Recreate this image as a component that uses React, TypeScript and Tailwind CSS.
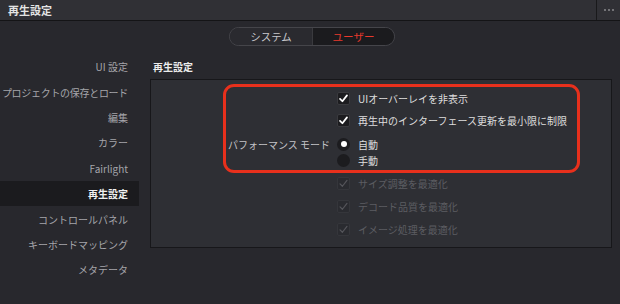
import React from 'react';

const font = { fontFamily: '"Noto Sans CJK JP", "Noto Sans", sans-serif' };

const sideItems = [
  'UI 設定',
  'プロジェクトの保存とロード',
  '編集',
  'カラー',
  'Fairlight',
  '再生設定',
  'コントロールパネル',
  'キーボードマッピング',
  'メタデータ',
];

const Check = ({ dim }: { dim?: boolean }) => (
  <span
    className={`flex h-[13px] w-[13px] shrink-0 items-center justify-center rounded-[2px] ${
      dim ? 'bg-[#2a2b30] border border-[#35363b]' : 'bg-[#1c1c1f] border border-[#3a3a3e]'
    }`}
  >
    <svg viewBox="0 0 12 12" className="h-[11px] w-[11px]">
      <path
        d="M2.2 6.4 L4.8 9 L9.8 2.6"
        fill="none"
        stroke={dim ? '#55565b' : '#ffffff'}
        strokeWidth={dim ? 1.3 : 1.9}
        strokeLinecap="round"
        strokeLinejoin="round"
      />
    </svg>
  </span>
);

const Radio = ({ on }: { on?: boolean }) => (
  <span className="flex h-[13px] w-[13px] shrink-0 items-center justify-center rounded-full bg-[#1c1c1f]">
    {on && <span className="h-[6px] w-[6px] rounded-full bg-white" />}
  </span>
);

export default function App() {
  return (
    <div style={font} className="flex h-[304px] w-[620px] flex-col overflow-hidden whitespace-nowrap bg-[#28282d] text-[10px]">
      <div className="flex h-[21px] shrink-0 items-center border-b border-[#141416] bg-[#303035]">
        <span className="pl-[8px] text-[11px] font-bold text-[#e4e4e4]">再生設定</span>
        <div className="ml-auto flex h-full w-[24px] items-center justify-center gap-[2px] border-l border-[#19191b]">
          <span className="h-[2px] w-[2px] rounded-full bg-[#8a8a8e]" />
          <span className="h-[2px] w-[2px] rounded-full bg-[#8a8a8e]" />
          <span className="h-[2px] w-[2px] rounded-full bg-[#8a8a8e]" />
        </div>
      </div>

      <div className="mt-[6px] flex justify-center pl-[4px]">
        <div className="flex h-[19px] overflow-hidden rounded-full border border-[#45454a]">
          <div className="flex w-[82px] items-center justify-center bg-[#2a2a2f] text-[10.5px] text-[#c8c8cc]">
            システム
          </div>
          <div className="flex w-[82px] items-center justify-center border-l border-[#3a3a3e] bg-[#1b1b1e] text-[10.5px] text-[#e8392c]">
            ユーザー
          </div>
        </div>
      </div>

      <div className="mt-[8px] flex flex-1">
        <div className="flex w-[139px] shrink-0 flex-col">
          {sideItems.map((s) => (
            <div
              key={s}
              className={`flex h-[25.4px] items-center justify-end pr-[11px] ${
                s === '再生設定' ? 'bg-[#1b1b1e] font-bold text-[#f0f0f0]' : 'text-[#a5a5aa]'
              } ${s.length > 10 ? 'tracking-[-0.3px]' : ''}`}
            >
              {s}
            </div>
          ))}
        </div>

        <div className="flex flex-1 flex-col pl-[11px] pr-[8px]">
          <div className="flex h-[25.4px] items-center pl-[3px] font-bold text-[#ececec]">再生設定</div>
          <div className="relative h-[169px] border border-[#17171a] bg-[#2e2f34] pt-[7px]">
            <div className="pointer-events-none absolute left-[72px] top-[4px] h-[89px] w-[357px] rounded-[11px] border-[3px] border-[#e8301c]" />
            <div className="flex flex-col">
              <div className="flex h-[22px] items-center pl-[186px]">
                <Check />
                <span className="ml-[8px] text-[#dedede]">UIオーバーレイを非表示</span>
              </div>
              <div className="flex h-[23px] items-center pl-[186px]">
                <Check />
                <span className="ml-[8px] text-[#dedede]">再生中のインターフェース更新を最小限に制限</span>
              </div>
              <div className="mt-[4px] flex">
                <div className="flex h-[16px] w-[179px] items-center justify-end text-[#c4c4c8]">パフォーマンス モード</div>
                <div className="ml-[7px] flex flex-col">
                  <div className="flex h-[16px] items-center">
                    <Radio on />
                    <span className="ml-[8px] text-[#dedede]">自動</span>
                  </div>
                  <div className="flex h-[16px] items-center">
                    <Radio />
                    <span className="ml-[8px] text-[#dedede]">手動</span>
                  </div>
                </div>
              </div>
              <div className="mt-[4px] flex h-[23px] items-center pl-[186px]">
                <Check dim />
                <span className="ml-[8px] text-[#5c5d62]">サイズ調整を最適化</span>
              </div>
              <div className="flex h-[23px] items-center pl-[186px]">
                <Check dim />
                <span className="ml-[8px] text-[#5c5d62]">デコード品質を最適化</span>
              </div>
              <div className="flex h-[23px] items-center pl-[186px]">
                <Check dim />
                <span className="ml-[8px] text-[#5c5d62]">イメージ処理を最適化</span>
              </div>
            </div>
          </div>
        </div>
      </div>
    </div>
  );
}
